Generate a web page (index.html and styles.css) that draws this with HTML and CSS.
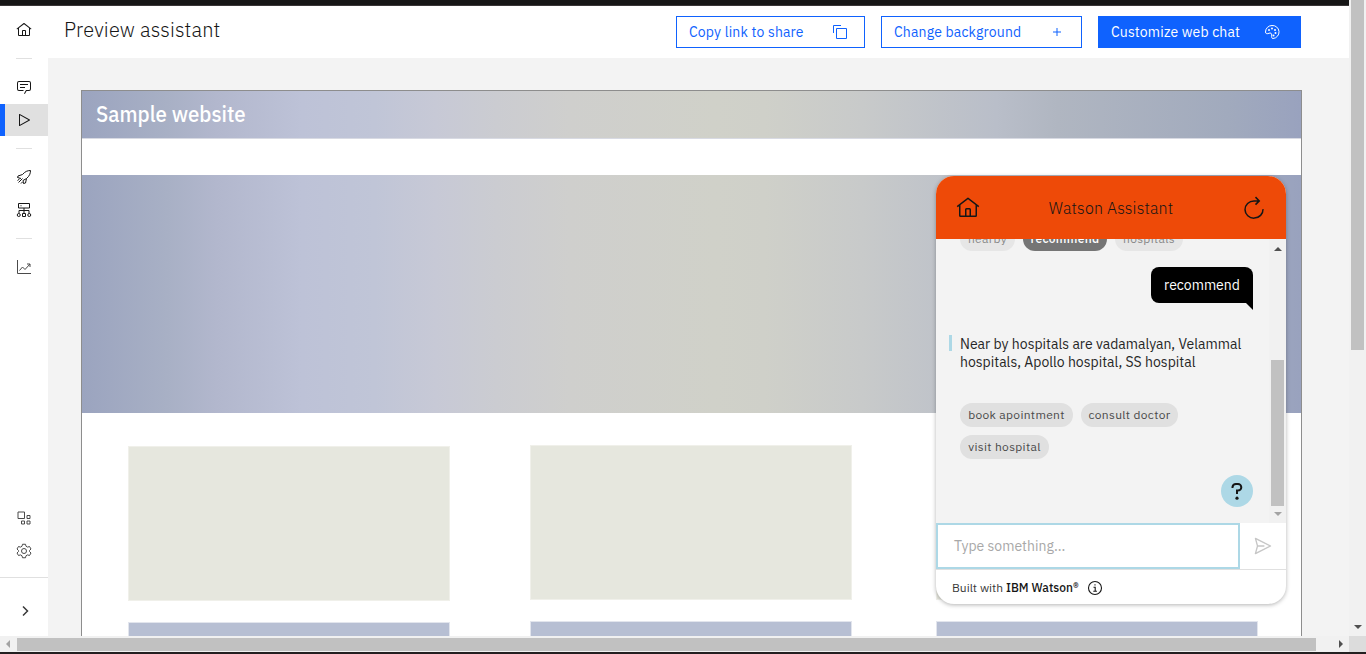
FILE: index.html
```html
<!DOCTYPE html>
<html lang="en">
<head>
<meta charset="utf-8">
<title>Preview assistant</title>
<link rel="stylesheet" href="styles.css">
</head>
<body>
<div class="window">
  <div class="view">
    <div class="topbar"></div>
    <div class="app">
      <nav class="rail">
        <a class="rail-item home"><svg viewBox="0 0 32 32"><path d="M16.61 2.21a1 1 0 0 0-1.24 0L1 13.42l1.24 1.57L4 13.62V26a2 2 0 0 0 2 2h20a2 2 0 0 0 2-2V13.63L29.76 15 31 13.43ZM18 26h-4v-8h4Zm2 0v-8a2 2 0 0 0-2-2h-4a2 2 0 0 0-2 2v8H6V12.06l10-7.79 10 7.8V26Z"/></svg></a>
        <hr>
        <a class="rail-item note"><svg viewBox="0 0 32 32"><path d="M17.74 30 16 29l4-7h6a2 2 0 0 0 2-2V8a2 2 0 0 0-2-2H6a2 2 0 0 0-2 2v12a2 2 0 0 0 2 2h9v2H6a4 4 0 0 1-4-4V8a4 4 0 0 1 4-4h20a4 4 0 0 1 4 4v12a4 4 0 0 1-4 4h-4.84ZM8 10h16v2H8ZM8 16h10v2H8Z"/></svg></a>
        <a class="rail-item active"><svg viewBox="0 0 32 32"><path d="M7 28a1 1 0 0 1-1-1V5a1 1 0 0 1 1.48-.88l20 11a1 1 0 0 1 0 1.76l-20 11A1 1 0 0 1 7 28ZM8 6.69v18.62L24.92 16Z"/></svg></a>
        <hr class="low">
        <a class="rail-item"><svg viewBox="0 0 32 32" class="line"><path d="M13 11C18 5 23 3 29 3c0 6-2 11-8 16l-2 9-4 1-1-6M13 11l-9 3-1 3 7 2M21 19l-7 4M5 27l8-8M3 23l4-3M10 29l3-3"/></svg></a>
        <a class="rail-item"><svg viewBox="0 0 32 32" class="line"><path d="M5 3h22v9H5ZM16 12v11M6 23v-6h20v6"/><circle cx="5.500" cy="26" r="3"/><path d="M13 23h6v6h-6Z"/><circle cx="26.500" cy="26" r="3"/><path d="M9 7.500h2"/></svg></a>
        <hr class="low">
        <a class="rail-item soft"><svg viewBox="0 0 32 32" class="line"><path d="M3 2v27h27M7 23l6-7 5 5L28 10M22 10h6v6"/></svg></a>
        <span class="grow"></span>
        <a class="rail-item soft"><svg viewBox="0 0 32 32" class="line"><path d="M4 4h13v13H4ZM22 11h6v6h-6ZM11 22h6v6h-6ZM22 22h6v6h-6Z"/></svg></a>
        <a class="rail-item soft"><svg viewBox="0 0 32 32" class="line"><path d="M13 2.500h6l1 4 3 1.700 4-1.200 3 5-3 3v2l3 3-3 5-4-1.200-3 1.700-1 4h-6l-1-4-3-1.700L5 25l-3-5 3-3v-2l-3-3 3-5 4 1.200 3-1.700Z"/><circle cx="16" cy="16" r="5"/></svg></a>
        <a class="expand"><svg viewBox="0 0 16 16"><path d="m6 3.500 4.500 4.500L6 12.500"/></svg></a>
      </nav>
      <div class="content">
        <header class="header">
          <h1>Preview assistant</h1>
          <button class="btn copy"><span>Copy link to share</span><svg viewBox="0 0 32 32"><path d="M28 10v18H10V10h18m0-2H10a2 2 0 0 0-2 2v18a2 2 0 0 0 2 2h18a2 2 0 0 0 2-2V10a2 2 0 0 0-2-2ZM4 18H2V4a2 2 0 0 1 2-2h14v2H4Z"/></svg></button>
          <button class="btn change"><span>Change background</span><svg viewBox="0 0 32 32"><path d="M17 15V8h-2v7H8v2h7v7h2v-7h7v-2Z"/></svg></button>
          <button class="btn primary"><span>Customize web chat</span><svg viewBox="0 0 32 32"><path class="stroke" d="M16 3A13 13 0 0 0 3 16c0 4 4 4 7 2.500 3-1.500 6 .5 5.500 3.500-.5 4-.5 7 2.500 7A13 13 0 0 0 16 3Z"/><circle cx="10" cy="12" r="2"/><circle cx="16" cy="9" r="2"/><circle cx="22" cy="12" r="2"/><circle cx="23" cy="18" r="2"/><circle cx="19" cy="23" r="2"/></svg></button>
        </header>
        <main class="stage">
          <div class="site">
            <div class="site-head gradient"><span>Sample website</span></div>
            <div class="site-hero gradient"></div>
            <div class="cards">
              <div class="col first"><div class="card"></div><div class="card blue"></div></div>
              <div class="col"><div class="card"></div><div class="card blue"></div></div>
              <div class="col third"><div class="card"></div><div class="card blue"></div></div>
            </div>
          </div>
        </main>
      </div>
    </div>
    <section class="chat">
      <div class="chat-head">
        <svg viewBox="0 0 32 32"><path d="M16.61 2.210a1 1 0 0 0-1.24 0L1 13.420l1.240 1.570L4 13.620V26a2 2 0 0 0 2 2h20a2 2 0 0 0 2-2V13.630L29.760 15 31 13.430ZM18 26h-4v-8h4Zm2 0v-8a2 2 0 0 0-2-2h-4a2 2 0 0 0-2 2v8H6V12.060l10-7.790 10 7.800V26Z"/></svg>
        <span>Watson Assistant</span>
        <svg viewBox="0 0 32 32" class="line"><path d="M18 1.500l5 5-5 5M23 6.500h-7a12 11.500 0 1 0 12 11"/></svg>
      </div>
      <div class="chat-body">
        <div class="messages">
          <div class="pills old"><span class="w55">nearby</span><span class="w84 chosen">recommend</span><span class="w68">hospitals</span></div>
          <div class="bubble">recommend</div>
          <div class="reply">Near by hospitals are vadamalyan, Velammal<br><span>hospitals, Apollo hospital, SS hospital</span></div>
          <div class="pills"><span class="w113">book apointment</span><span class="w97">consult doctor</span><span class="w89">visit hospital</span></div>
          <div class="help"><svg viewBox="0 0 32 32"><path d="M11.500 13v-1a3.500 3.500 0 0 1 3.500-3h2a3.300 3.300 0 0 1 0 6.600h-1v3.400"/><circle cx="16" cy="23.200" r="1.600"/></svg></div>
        </div>
        <div class="chat-scroll"><i class="up"></i><b></b><i class="down"></i></div>
      </div>
      <div class="entry"><div class="field">Type something...</div><svg viewBox="0 0 32 32"><path d="m27.450 15.110-22-11a1 1 0 0 0-1.410 1.120L7 16 4 26.740A1 1 0 0 0 5.450 27.890l22-11a1 1 0 0 0 0-1.780Zm-20.900 10L8.760 17H18v-2H8.760L6.550 6.890 24.760 16Z"/></svg></div>
      <div class="chat-foot"><span>Built with <b>IBM Watson<sup>®</sup></b></span><svg viewBox="0 0 16 16"><circle cx="8" cy="8" r="6.500"/><path d="M6.500 7.200h1.700v4M6.300 11.300h3.600M8 4.300v1.300"/></svg></div>
    </section>
  </div>
  <div class="vscroll"><b></b><i class="down"></i></div>
  <div class="hscroll"><i class="left"></i><b></b><i class="right"></i></div>
  <div class="corner"></div>
</div>
</body>
</html>
```

FILE: styles.css
```css
* { box-sizing: border-box; }
body { margin: 0; overflow: hidden; font-family: "IBM Plex Sans", Roboto, sans-serif; font-weight: 400; color: #161616; }
svg { display: block; flex: none; fill: currentColor; }
.line { fill: none; stroke: currentColor; stroke-width: 2; }

.window { width: 1366px; height: 654px; display: grid; grid-template: 636px 16px / 1349px 17px; background: #231f20; }
.view { position: relative; overflow: hidden; background: #f3f3f3; }
.topbar { height: 6px; background: #161616; border-bottom: 1px solid #393637; }
.app { display: flex; height: 630px; }

.rail { width: 48px; background: #fff; display: flex; flex-direction: column; padding-top: 7px; flex: none; }
.rail-item { height: 33px; display: flex; align-items: center; justify-content: center; flex: none; }
.rail-item svg { width: 16px; height: 16px; }
.rail .home { height: 34px; }
.rail .note { padding-bottom: 2px; }
.rail hr { width: 16px; height: 1px; border: 0; background: #e0e0e0; margin: 11px 16px 12px; flex: none; }
.rail .low { margin: 12px 16px 11px; }
.rail .active { height: 32px; background: #e0e0e0; border-left: 5px solid #0f62fe; padding-right: 5px; }
.rail .soft { color: #4a4a4a; }
.grow { flex: 1; }
.expand { height: 59px; margin-top: 10px; border-top: 1px solid #e0e0e0; display: flex; justify-content: center; padding: 25px 0 0 2px; }
.expand svg { width: 16px; height: 16px; fill: none; stroke: #393939; stroke-width: 1.5; }

.content { flex: 1; display: flex; flex-direction: column; }
.header { height: 52px; background: #fff; display: flex; align-items: flex-start; padding: 10px 48px 0 16px; gap: 16px; }
h1 { margin: 1px auto 0 0; font-size: 20px; line-height: 26px; font-weight: 300; letter-spacing: .17px; }
.btn { height: 32px; border: 1px solid #0f62fe; background: #fff; color: #0f62fe; font: 14px/18px "IBM Plex Sans", Roboto, sans-serif; padding: 0 12px; display: flex; align-items: center; justify-content: space-between; white-space: nowrap; }
.btn svg { width: 16px; height: 16px; margin-right: 4px; }
.copy { width: 189px; letter-spacing: .16px; }
.change { width: 201px; letter-spacing: .16px; }
.primary { width: 203px; background: #0f62fe; color: #fff; letter-spacing: .16px; }
.primary svg { margin-right: 8px; }
.stroke { fill: none; stroke: currentColor; stroke-width: 2; }

.stage { flex: 1; padding: 32px 47px 0 33px; min-height: 0; }
.site { height: 546px; border: 1px solid #8d8d8d; border-bottom: 0; background: #fff; overflow: hidden; }
.gradient { background: linear-gradient(90deg, #9ba4bf 0%, #a8b0c5 7%, #b2b7cd 11%, #bdc2d7 18%, #c0c5d7 24%, #c7c9d6 29%, #cbccd1 34%, #cfcfcd 40%, #d0d1c9 52%, #cfd0c9 56%, #c8caca 64%, #b9bec9 75%, #b0b6c1 80%, #a1aabd 94%, #99a2be 100%); }
.site-head { height: 48px; border-bottom: 1px solid #d8dae3; color: #fff; font-size: 23px; line-height: 46px; font-weight: 500; padding-left: 14px; }
.site-head span { display: block; width: 170px; margin-top: -1px; transform: scaleX(.89); transform-origin: left; white-space: nowrap; }
.site-hero { margin-top: 36px; height: 238px; }
.cards { display: grid; grid-template-columns: 322px 322px 322px; column-gap: 80px; padding: 32px 0 0 46px; }
.col { display: flex; flex-direction: column; gap: 21px; }
.first { padding-top: 1px; }
.third { margin: 0 -4px 0 4px; }
.card { height: 155px; background: #e6e7de; border: 1px solid #f0f0ea; }
.blue { background: #b7bfd3; border-color: #e2e5ed; }
.site-head { display: flow-root; }

.chat { position: absolute; left: 936px; top: 176px; width: 350px; height: 428px; border-radius: 18px; overflow: hidden; background: #fff; box-shadow: 0 1px 4px rgba(0, 0, 0, .3); display: flex; flex-direction: column; }
.chat-head { height: 63px; background: #ee4a08; display: flex; align-items: center; justify-content: space-between; padding: 1px 20px 0; font-size: 16px; }
.chat-head svg { width: 24px; height: 24px; }
.chat-head span { font-weight: 300; letter-spacing: .16px; }
.chat-body { height: 284px; display: flex; background: #f3f3f3; }
.messages { width: 333px; overflow: hidden; padding: 0 16px 0 24px; display: flex; flex-direction: column; }
.pills { display: flex; flex-wrap: wrap; gap: 8px; margin-top: 32px; font-size: 12px; letter-spacing: .32px; width: 260px; flex: none; }
.pills span { height: 24px; line-height: 24px; border-radius: 12px; background: #e0e0e0; color: #4a4a4a; text-align: center; white-space: nowrap; }
.pills.old { margin-top: -12px; }
.pills.old span { background: #e6e6e6; color: #888; }
.pills.old .chosen { background: #757575; color: #fff; font-weight: 500; }
.w55 { width: 55px; } .w84 { width: 84px; } .w68 { width: 68px; }
.w113 { width: 113px; } .w97 { width: 97px; } .w89 { width: 89px; }
.bubble { position: relative; align-self: flex-end; margin-top: 16px; width: 102px; height: 36px; border-radius: 8px 8px 0 8px; background: #000; color: #fff; font-size: 14px; line-height: 37px; text-align: center; flex: none; }
.bubble::after { content: ""; position: absolute; right: 0; top: 36px; border-top: 7px solid #000; border-left: 7px solid transparent; }
.reply { position: relative; margin-top: 32px; font-size: 14px; line-height: 18px; white-space: nowrap; flex: none; color: #262626; }
.reply::before { content: ""; position: absolute; left: -11px; top: 0; width: 3px; height: 16px; background: #add8e6; }
.help { align-self: flex-end; margin-top: 16px; width: 32px; height: 32px; border-radius: 50%; background: #add8e6; flex: none; }
.help path { fill: none; stroke: #161616; stroke-width: 2; }
.chat-scroll { width: 17px; background: #f1f1f1; display: flex; flex-direction: column; align-items: center; padding: 8px 2px 7px; }
.chat-scroll b { width: 13px; height: 146px; background: #c1c1c1; margin: auto 0 6px; }
.up, .down, .left, .right { border: 4px solid transparent; width: 0; height: 0; }
.up { border-top: 0; border-bottom-color: #505050; }
.down { border-bottom: 0; border-top-color: #505050; }
.left { border-left: 0; border-right-color: #a3a3a3; }
.right { border-right: 0; border-left-color: #505050; }
.chat-scroll .down { border-top-color: #a3a3a3; }
.entry { height: 47px; border-bottom: 1px solid #e0e0e0; display: flex; }
.field { width: 304px; border: 2px solid #add8e6; padding-left: 16px; font-size: 14px; line-height: 42px; color: #a8a8a8; }
.entry svg { width: 22px; height: 22px; margin: 12px 0 0 12px; color: #c6c6c6; }
.chat-foot { flex: 1; display: flex; align-items: center; gap: 8px; padding: 1px 16px 0; font-size: 12px; color: #393939; }
.chat-foot b { font-weight: 500; color: #161616; }
.chat-foot sup { font-size: 12px; vertical-align: 0; line-height: 0; }
.chat-foot svg { width: 16px; height: 16px; fill: none; stroke: #161616; stroke-width: 1.1; }

.vscroll { background: #f1f1f1; display: flex; flex-direction: column; align-items: center; justify-content: space-between; padding-bottom: 7px; }
.vscroll b { width: 13px; height: 350px; background: #c1c1c1; }
.hscroll { background: #f1f1f1; display: flex; align-items: center; padding: 0 6px; }
.hscroll b { width: 1299px; height: 13px; background: #c1c1c1; margin: 1px auto 0 7px; }
.corner { background: #dcdcdc; }
```
